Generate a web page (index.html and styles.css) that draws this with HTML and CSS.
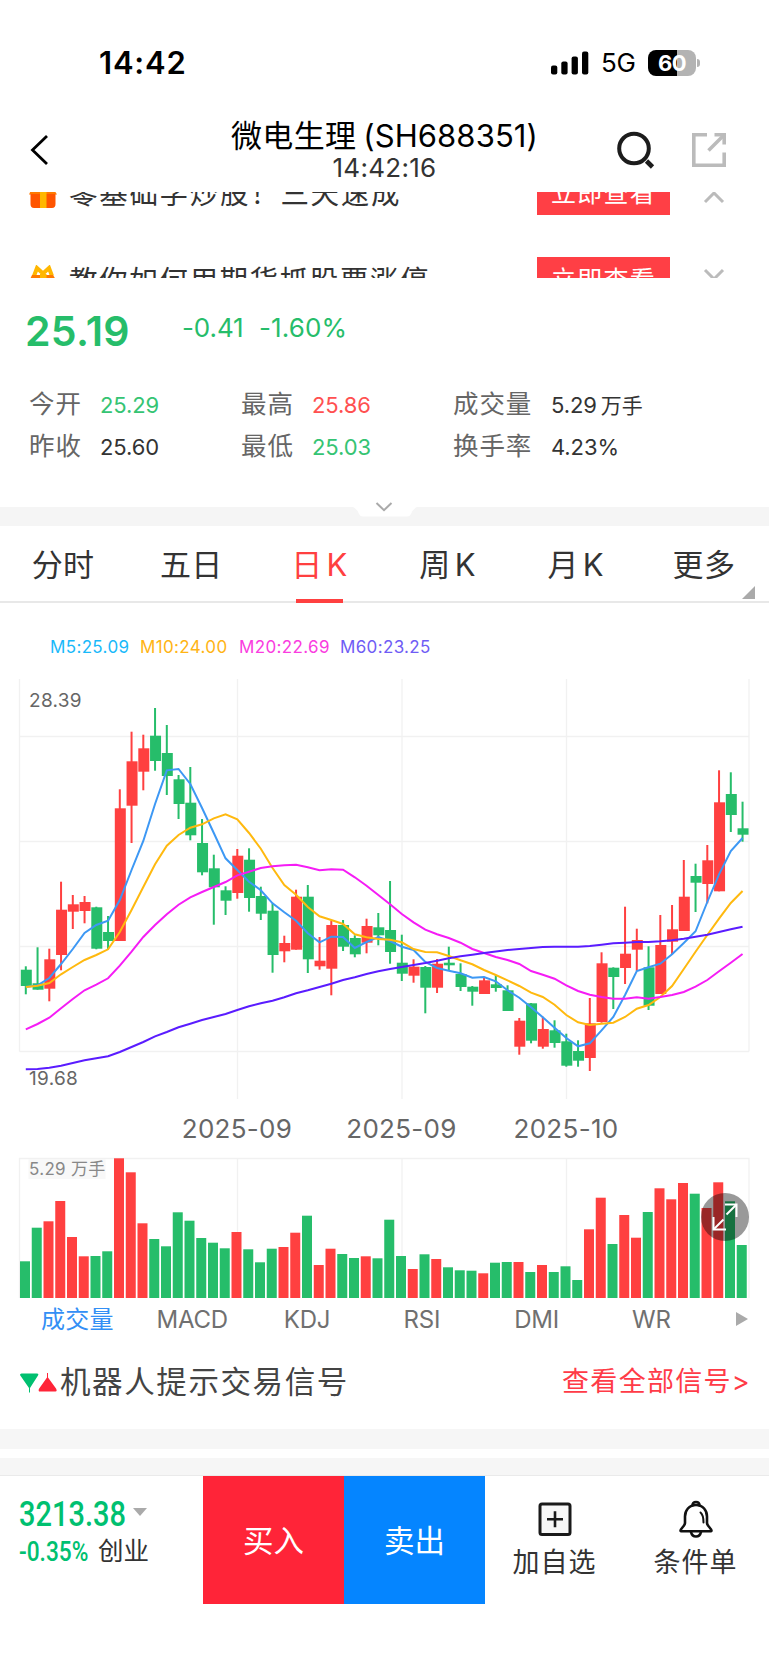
FILE: index.html
```html
<!DOCTYPE html>
<html lang="zh-CN">
  <head>
    <meta charset="utf-8">
    <title>微电生理(SH688351)</title>
    <link rel="stylesheet" href="styles.css">
  </head>
<body>
  <div class="status">
    <span class="status-time">14:42</span>
    <div class="status-right">
      <svg class="signal" width="38" height="24" viewBox="0 0 38 24">
        <rect x="0" y="14.5" width="6.3" height="9" rx="2"/>
        <rect x="10.3" y="10.5" width="6.3" height="13" rx="2"/>
        <rect x="20.6" y="5.5" width="6.3" height="18" rx="2"/>
        <rect x="31" y="0.5" width="6.3" height="23" rx="2"/>
      </svg>
      <span class="net">5G</span>
      <span class="battery">60</span>
      <span class="battery-nub"></span>
    </div>
  </div>

  <header class="header">
    <svg class="back" width="20" height="34" viewBox="0 0 20 34">
      <path d="M17 3 L2.5 17 L17 31" fill="none" stroke="#000" stroke-width="2.8"/>
    </svg>
    <div class="title">
      <h1>微电生理<span class="code">(SH688351)</span></h1>
      <p>14:42:16</p>
    </div>
    <div class="header-icons">
      <svg width="38" height="38" viewBox="0 0 38 38" fill="none" stroke="#1c1c1c" stroke-width="4">
        <circle cx="17" cy="17.5" r="14.8"/>
        <path d="M29.5 30 L35.5 36" stroke-width="4.6"/>
      </svg>
      <svg class="share" width="36" height="36" viewBox="0 0 36 36" fill="none" stroke="#bbb" stroke-width="3.6">
        <path d="M16 2.8 H2.8 V33.2 H33.2 V20.5"/>
        <path d="M23.5 2.8 H33.2 V12.5"/>
        <path d="M33 3 L17.5 18.5"/>
      </svg>
    </div>
  </header>

  <div class="promos">
    <div class="promo">
      <svg class="gift" width="30" height="30" viewBox="0 0 30 30">
        <path d="M6 11 L9 3 L15 8.500 L21 3 L24 11" fill="none" stroke="#ffb700" stroke-width="4"/>
        <path d="M4 10 H25 L29 16.5 H1 Z" fill="#ff7a00"/>
        <path d="M2.5 16 H27.5 V26 Q27.5 30 24 30 H6 Q2.5 30 2.5 26 Z" fill="#ff5500"/>
        <rect x="12" y="9" width="6.5" height="21" fill="#ffb700"/>
      </svg>
      <span class="promo-text">零基础学炒股！三天速成</span>
      <button class="promo-btn">立即查看</button>
      <svg class="promo-arrow" width="22" height="14" viewBox="0 0 22 14"><path d="M2 12 L11 3 L20 12"/></svg>
    </div>
    <div class="promo">
      <svg class="gift" width="30" height="30" viewBox="0 0 30 30">
        <path d="M6 11 L9 3 L15 8.500 L21 3 L24 11" fill="none" stroke="#ffb700" stroke-width="4"/>
        <path d="M4 10 H25 L29 16.5 H1 Z" fill="#ff7a00"/>
        <path d="M2.5 16 H27.5 V26 Q27.5 30 24 30 H6 Q2.5 30 2.5 26 Z" fill="#ff5500"/>
        <rect x="12" y="9" width="6.5" height="21" fill="#ffb700"/>
      </svg>
      <span class="promo-text">教你如何用期货抓股票涨停</span>
      <button class="promo-btn">立即查看</button>
      <svg class="promo-arrow down" width="22" height="14" viewBox="0 0 22 14"><path d="M2 2 L11 11 L20 2"/></svg>
    </div>
  </div>

  <section class="quote">
    <div class="quote-main">
      <span class="price">25.19</span>
      <span class="change">-0.41</span>
      <span class="percent">-1.60%</span>
    </div>
    <div class="stats">
      <div class="stat"><label>今开</label><span class="down">25.29</span></div>
      <div class="stat"><label>最高</label><span class="up">25.86</span></div>
      <div class="stat wide"><label>成交量</label><span>5.29<i>万手</i></span></div>
      <div class="stat"><label>昨收</label><span>25.60</span></div>
      <div class="stat"><label>最低</label><span class="down">25.03</span></div>
      <div class="stat wide"><label>换手率</label><span>4.23%</span></div>
    </div>
  </section>

  <div class="expand">
    <svg width="64" height="19" viewBox="0 0 64 19">
      <path d="M0 0 H64 Q60 2 58 7 Q57 9.5 54 9.5 H10 Q7 9.5 6 7 Q4 2 0 0 Z" fill="#fff"/>
    </svg>
    <svg class="expand-arrow" width="18" height="10" viewBox="0 0 18 10"><path d="M1.5 1 L9 8.2 L16.5 1" fill="none" stroke="#aaa" stroke-width="2"/></svg>
  </div>

  <nav class="tabs">
    <a>分时</a>
    <a>五日</a>
    <a class="active">日<b>K</b></a>
    <a>周<b>K</b></a>
    <a>月<b>K</b></a>
    <a class="more">更多</a>
  </nav>

  <div class="legend">
    <span class="m5">M5:25.09</span>
    <span class="m10">M10:24.00</span>
    <span class="m20">M20:22.69</span>
    <span class="m60">M60:23.25</span>
  </div>

  <svg id="kline" class="kline" width="769" height="478" viewBox="0 0 769 478"></svg>

  <div class="volume-box">
    <svg id="volume" class="volume" width="769" height="150" viewBox="0 0 769 150"></svg>
    <span class="fullscreen">
      <svg width="48" height="48" viewBox="0 0 48 48" fill="none" stroke="#fff" stroke-width="2">
        <path d="M24 11.5 H35.5 V24"/>
        <path d="M35 12 L25.5 21.5"/>
        <path d="M12.5 24 V36.5 H25"/>
        <path d="M13 36 L22.5 26.5"/>
      </svg>
    </span>
  </div>

  <nav class="indicators">
    <a class="active">成交量</a>
    <a>MACD</a>
    <a>KDJ</a>
    <a>RSI</a>
    <a>DMI</a>
    <a>WR</a>
    <span class="next"></span>
  </nav>

  <div class="signals">
    <svg class="signals-icon" width="38" height="22" viewBox="0 0 38 22">
      <path d="M0 3 Q0 1.5 1.5 1.5 H17 Q19 1.5 18 3.5 L10 16 V20.5 H9 V16 L1 4.5 Z" fill="#00c070"/>
      <path d="M19 19.5 Q18 18 19.2 16.5 L27 5.5 V1 H28 V5.5 L36 16.5 Q37.5 19.5 35.5 19.5 Z" fill="#ff2438"/>
    </svg>
    <span class="signals-title">机器人提示交易信号</span>
    <a class="signals-all">查看全部信号&gt;</a>
  </div>
  <div class="gap"></div>
  <div class="gap last"></div>

  <footer class="footer">
    <div class="index">
      <div class="index-value"><b>3213.38</b></div>
      <div class="index-change"><b>-0.35%</b><span>创业</span></div>
    </div>
    <button class="buy">买入</button>
    <button class="sell">卖出</button>
    <div class="action">
      <svg width="34" height="38" viewBox="0 0 34 38">
        <rect x="2" y="4" width="30" height="30.5" rx="2" fill="#f7f7f7" stroke="#1a1a1a" stroke-width="3"/>
        <path d="M9 19.2 H25 M17 11.2 V27.2" stroke="#1a1a1a" stroke-width="2.6"/>
      </svg>
      <span>加自选</span>
    </div>
    <div class="action">
      <svg width="36" height="38" viewBox="0 0 36 38" fill="none" stroke="#111" stroke-width="2.6" stroke-linejoin="round" stroke-linecap="round">
        <path d="M14.5 5.5 Q14.5 2 18 2 Q21.5 2 21.5 5.5"/>
        <path d="M18 5 C11 5 7 10.5 7 16.5 V23 C7 26 2.5 28.5 2.5 30.5 Q2.5 31.3 4 31.3 H32 Q33.5 31.3 33.5 30.5 C33.5 28.5 29 26 29 23 V16.5 C29 10.5 25 5 18 5 Z"/>
        <path d="M13 32 Q14 36.5 18 36.5 Q22 36.5 23 32"/>
        <path d="M22.5 12.5 Q25.5 15 25.5 22.5" stroke-width="2"/>
      </svg>
      <span>条件单</span>
    </div>
  </footer>

  <script src="chart.js"></script>
</body>
</html>
```

FILE: styles.css
```css
* {
	box-sizing: border-box;
}
body {
	margin: 0;
	width: 769px;
	height: 1670px;
	overflow: hidden;
	background: #fff;
	color: #333;
	font-family: Inter, "Noto Sans CJK SC", sans-serif;
}
h1, p {
	margin: 0;
	font-weight: 400;
}
button {
	border: 0;
	padding: 0;
	color: #fff;
	font-family: inherit;
}
svg {
	display: block;
	flex: none;
}

/* 状态栏 */
.status {
	height: 112px;
	padding: 13px 69px 0 99px;
	display: flex;
	align-items: center;
	justify-content: space-between;
	color: #000;
}
.status-time {
	font-size: 31px;
	font-weight: 600;
	letter-spacing: 0.8px;
}
.status-right {
	display: flex;
	align-items: center;
}
.net {
	margin-left: 12px;
	width: 47px;
	font-size: 26px;
	letter-spacing: -0.3px;
}
.battery {
	width: 48px;
	height: 26px;
	border-radius: 8px;
	background: linear-gradient(90deg, #000 60%, #b3b3b3 60%);
	color: #fff;
	font-size: 22px;
	line-height: 26px;
	font-weight: 700;
	letter-spacing: -0.5px;
	text-align: center;
}
.battery-nub {
	width: 3px;
	height: 8px;
	margin-left: 1px;
	border-radius: 0 3px 3px 0;
	background: #b3b3b3;
}

/* 标题栏 */
.header {
	height: 80px;
	padding: 0 42px 5px;
	display: grid;
	grid-template-columns: 1fr auto 1fr;
	align-items: center;
}
.back {
	margin-left: -12px;
}
.title {
	margin-top: 3px;
	text-align: center;
	color: #000;
}
.title h1 {
	font-size: 31px;
	line-height: 33px;
	letter-spacing: 0.3px;
}
.title .code {
	margin-left: 7px;
	letter-spacing: 0.1px;
}
.title p {
	font-size: 26px;
	line-height: 32px;
	letter-spacing: 0.3px;
	color: #333;
}
.header-icons {
	display: flex;
	align-items: center;
	justify-content: flex-end;
	gap: 36px;
}

/* 活动 */
.promos {
	height: 86px;
	overflow: hidden;
}
.promo {
	height: 87px;
	padding-left: 28px;
	display: flex;
	align-items: center;
}
.promo:first-child {
	margin-top: -43px;
}
.promo-text {
	width: 468px;
	margin: -2px 0 0 11px;
	font-size: 28.5px;
	letter-spacing: 1.6px;
	white-space: nowrap;
}
.promo:first-child .promo-text {
	letter-spacing: 1.7px;
}
.promo-btn {
	width: 133px;
	height: 45px;
	margin-left: auto;
	background: #ff3f45;
	font-size: 25px;
	line-height: 46px;
	letter-spacing: 1.3px;
}
.promo-arrow {
	margin: 9px 44px 0 33px;
}
.promo-arrow.down {
	margin-top: -9px;
}
.promo-arrow path {
	fill: none;
	stroke: #bbb;
	stroke-width: 3;
}

/* 行情 */
.quote {
	height: 229px;
	padding-left: 30px;
}
.quote-main {
	height: 106px;
	display: flex;
	align-items: center;
	color: #26bd6a;
	font-size: 26px;
}
.price {
	width: 153px;
	margin-left: -5px;
	font-size: 41px;
	font-weight: 600;
	letter-spacing: 0.3px;
}
.change {
	width: 77px;
	margin: -7px 0 0 4px;
	letter-spacing: -0.1px;
}
.percent {
	margin-top: -7px;
	letter-spacing: 0.1px;
}
.stats {
	display: grid;
	grid-template-columns: 212px 212px auto;
	grid-auto-rows: 42px;
}
.stat {
	display: flex;
	align-items: center;
	font-size: 22px;
	line-height: 42px;
	letter-spacing: -0.1px;
}
.stat label {
	width: 71px;
	margin: -3px 0 0 -1px;
	color: #666;
	font-size: 25.5px;
	letter-spacing: 0.9px;
}
.stat.wide label {
	width: 98px;
}
.stat i {
	margin-left: 4px;
	font-size: 21px;
	font-style: normal;
}
.stat .up {
	color: #ff5050;
}
.stat .down {
	color: #35c473;
}
.expand {
	position: relative;
	height: 19px;
	background: #f5f5f5;
}
.expand > svg {
	margin: 0 auto;
}
.expand .expand-arrow {
	position: absolute;
	left: 375px;
	top: -5px;
}

/* 周期 */
.tabs {
	height: 77px;
	border-bottom: 2px solid #e8e8e8;
	display: grid;
	grid-template-columns: repeat(6, 1fr);
	text-align: center;
	font-size: 31px;
	line-height: 78px;
	letter-spacing: 0.3px;
}
.tabs a {
	position: relative;
	left: -1px;
	height: 77px;
}
.tabs b {
	margin-left: 4px;
	font-weight: 400;
}
.tabs .active {
	color: #ff4040;
}
.tabs .active:after {
	content: "";
	position: absolute;
	left: 41px;
	bottom: 0;
	width: 47px;
	height: 4px;
	background: #ff4040;
}
.tabs .more:after {
	content: "";
	position: absolute;
	right: 13px;
	bottom: 4px;
	border-left: 13px solid transparent;
	border-bottom: 13px solid #aaa;
}
.legend {
	height: 67px;
	padding: 20px 0 0 50px;
	display: flex;
	font-size: 17px;
	line-height: 48px;
	letter-spacing: 0.35px;
}
.legend span {
	width: 100px;
}
.legend .m5 {
	width: 90px;
	color: #19b9fa;
}
.legend .m10 {
	width: 99px;
	color: #ffb414;
}
.legend .m20 {
	width: 101px;
	color: #fa3ce0;
}
.legend .m60 {
	color: #6f5cf5;
}

/* K线 */
.grid {
	fill: none;
	stroke: #f1f1f1;
	stroke-width: 1.3;
}
.rise {
	fill: #ff4040;
}
.fall {
	fill: #26bd6a;
}
.line {
	fill: none;
	stroke-width: 2;
}
.price-label {
	fill: #666;
	font-size: 19px;
	letter-spacing: 0.3px;
}
.date-label {
	fill: #666;
	font-size: 26px;
	letter-spacing: 0.3px;
	text-anchor: middle;
}
.volume-box {
	position: relative;
	height: 150px;
}
.vol-bg {
	fill: #f8f8f8;
}
.vol-label {
	fill: #888;
	font-size: 17px;
	letter-spacing: 0.3px;
}
.fullscreen {
	position: absolute;
	left: 701px;
	top: 44.5px;
	width: 48px;
	height: 48px;
	border-radius: 50%;
	background: rgba(0, 0, 0, .4);
}
.indicators {
	height: 48px;
	margin-top: -2px;
	padding: 0 20px;
	display: flex;
	align-items: center;
	color: #707070;
	font-size: 24px;
	line-height: 48px;
	letter-spacing: -0.2px;
}
.indicators a {
	width: 114.8px;
	text-align: center;
	white-space: nowrap;
}
.indicators .active {
	color: #338ff5;
	letter-spacing: 0.2px;
}
.indicators .next {
	margin: -2px 1px 0 auto;
	border: 7.5px solid transparent;
	border-left: 12px solid #aaa;
	border-right: 0;
}

/* 交易信号 */
.signals {
	height: 85px;
	padding: 0 18px 7px 20px;
	display: flex;
	align-items: center;
	line-height: 40px;
}
.signals-icon {
	margin-top: -1px;
}
.signals-title {
	margin: -2px 0 0 2px;
	font-size: 30.5px;
	letter-spacing: 1.6px;
	color: #444;
}
.signals-all {
	margin: -2px 0 0 auto;
	color: #ff3b47;
	font-size: 27px;
	letter-spacing: 1.3px;
}
.gap {
	height: 20px;
	background: #f6f6f6;
}
.gap.last {
	height: 18px;
	margin-top: 9px;
}

/* 底部 */
.footer {
	height: 129px;
	display: flex;
	box-shadow: 0 -1px 0 #eaeaea;
}
.index {
	width: 203px;
	padding: 19px 0 0 19px;
	color: #00c070;
}
.index b {
	display: inline-block;
	font-family: Roboto, sans-serif;
	font-weight: 500;
	transform-origin: 0 50%;
	transform: scaleX(.84);
}
.index-value {
	display: flex;
	align-items: center;
	height: 38px;
	font-size: 34.5px;
}
.index-value b {
	width: 114px;
}
.index-value:after {
	content: "";
	margin-top: -4px;
	border: 7px solid transparent;
	border-top: 8px solid #aaa;
	border-bottom: 0;
}
.index-change {
	display: flex;
	align-items: center;
	height: 38px;
	font-size: 27px;
	line-height: 38px;
}
.index-change b {
	width: 79px;
}
.index-change span {
	margin-top: -3px;
	color: #333;
	font-size: 25.5px;
}
.buy, .sell {
	width: 141px;
	height: 128px;
	padding-top: 2px;
	background: #ff2438;
	font-size: 30.5px;
	line-height: 126px;
}
.sell {
	background: #0585ff;
}
.action {
	width: 141px;
	padding: 24px 2px 0 0;
	display: flex;
	flex-direction: column;
	align-items: center;
	font-size: 27px;
	line-height: 50px;
	letter-spacing: 1px;
}
```

FILE: chart.js
```js
// 每根K线: [涨1/跌0, 最高, 实体上沿, 实体下沿, 最低, 成交量]
var bars = [
	[0, 296.3, 299.7, 316, 324.3, 36.7],
	[0, 277.3, 313.3, 319.7, 319.7, 70.3],
	[1, 278.7, 289.3, 318.7, 331.3, 76.7],
	[1, 211.7, 239.7, 285, 300.3, 97],
	[1, 225, 234.3, 241.7, 259, 61],
	[1, 226, 232, 241, 253.3, 41.7],
	[0, 236.7, 237.3, 278.7, 279.3, 42],
	[0, 246, 262, 271, 279.3, 46.7],
	[1, 119.3, 138.3, 271, 271, 139.7],
	[1, 61.7, 91.3, 135.7, 173, 125.7],
	[1, 64.7, 78.3, 101.7, 120.3, 74.7],
	[0, 38, 65.7, 91, 100.7, 59],
	[0, 55, 83, 106, 125, 51.7],
	[0, 105, 109.3, 134, 149, 85.7],
	[0, 97, 132.7, 165.3, 170.3, 77.3],
	[0, 149, 173, 202.3, 205.3, 60],
	[0, 184.7, 198.3, 217.3, 254.7, 55.3],
	[0, 216.3, 220.3, 230.7, 245, 49.7],
	[1, 179, 185.7, 223, 228.7, 66],
	[0, 178.3, 189.7, 228, 241.7, 48.7],
	[0, 216.7, 226, 243.7, 250, 35.7],
	[0, 233.3, 240.7, 285, 302.7, 49.3],
	[1, 265.7, 273, 281.3, 292.3, 51],
	[1, 219.7, 226.7, 279.7, 279.7, 65.3],
	[0, 215, 226.7, 289.3, 303, 82.3],
	[1, 267, 290.7, 296.3, 299.7, 33],
	[1, 250.7, 255, 298.7, 325.3, 49.3],
	[0, 250, 255, 276.7, 281, 44],
	[0, 265.3, 268, 284.3, 287.3, 40],
	[1, 248.7, 256, 272.7, 283.3, 41.7],
	[0, 243, 257.3, 265.3, 275.3, 39.7],
	[0, 211, 260, 282, 293.7, 78.3],
	[0, 264.7, 292.7, 303.7, 311, 42],
	[1, 289.3, 296.7, 305.7, 312.7, 29],
	[0, 296, 297, 317.7, 343.3, 43.7],
	[1, 289, 293.7, 317.7, 323, 39],
	[0, 276.7, 292.7, 295.3, 300.7, 30.7],
	[0, 293.3, 304, 317, 321, 27.7],
	[0, 316, 316.7, 321.7, 335.7, 27.3],
	[1, 307.7, 310.3, 324, 324, 24.7],
	[0, 305, 314.3, 318, 321.7, 35.3],
	[0, 315.3, 320.3, 341, 341, 36],
	[1, 348, 350.7, 376.7, 384.7, 36],
	[0, 333, 333.3, 370.7, 373.3, 26],
	[1, 346.7, 359, 376.7, 378.7, 33],
	[0, 350.3, 360.3, 373, 377.7, 26],
	[0, 363.7, 371.3, 395.7, 396.7, 31.7],
	[0, 370.3, 381, 390.7, 396.7, 18],
	[1, 328, 353.3, 388, 401, 68.7],
	[1, 282.3, 293.3, 352, 352.7, 100.3],
	[0, 297.3, 297.7, 307, 339, 54],
	[1, 236.7, 283.7, 298, 314, 83],
	[1, 258.7, 270, 279.7, 301, 60.3],
	[0, 276.3, 297.3, 335.7, 340, 86],
	[1, 245, 275, 324, 324, 109.7],
	[1, 235, 259.3, 271.7, 284.3, 98.7],
	[1, 190, 226.7, 261, 261, 115],
	[0, 193.7, 206, 212.7, 242, 104.3],
	[1, 175, 190.3, 214, 233.3, 90],
	[1, 100.3, 132.3, 221.3, 221.3, 115.7],
	[0, 102.3, 124, 145, 162, 96.7],
	[0, 131.7, 158.3, 164.7, 171.7, 53]
];

// 均线
var lines = {
	"#3d98f4": [317, 315.3, 308, 294, 279, 263, 255, 250.7, 230, 200, 171, 134, 100.3, 99, 114, 138, 163, 188.3, 200, 211.7,
		220.3, 233.3, 242.3, 250.7, 263.3, 272.3, 266.7, 267, 278, 272, 267, 271, 276.7, 280, 292, 298, 300.7, 303.3, 307.7, 307,
		311.3, 320.3, 327.7, 337.3, 347.3, 357.7, 368, 376.3, 373.3, 360.3, 347, 325, 301, 297.3, 293.7, 284.3, 273, 261.3, 232, 204.3, 181, 168],
	"#ffb90f": [317, 315.7, 313, 304.3, 297, 290, 285, 279.3, 262, 240, 217, 194.3, 175.7, 165, 157.7, 154.3, 148.3, 144.3, 149.3, 163,
		178.7, 198, 215, 224.7, 237, 246.3, 250, 254, 264.3, 267.3, 269, 269.7, 272.3, 279, 282, 282.3, 286, 290.3, 294.3, 300,
		305, 310.3, 316, 322.7, 327, 334.7, 345, 352.3, 355, 353.7, 352.7, 347, 338.7, 335, 327, 316, 299, 281.7, 265, 248.7, 233, 221],
	"#f51cf5": [359.3, 354, 347.7, 338.3, 329, 320.3, 314.7, 308.3, 295.7, 281.7, 267, 255, 244.3, 234.7, 227.3, 222, 217, 212, 205.3, 201.7,
		198, 196.3, 195.3, 194.7, 197.3, 200.3, 199.3, 199.7, 207.3, 215.7, 225, 234.3, 244, 252.3, 259.7, 264.3, 268, 272.7, 279, 283,
		287, 290, 294, 301, 304.7, 308.7, 315.3, 321, 324.7, 327, 328.7, 328.7, 327.3, 328.7, 327, 325, 322, 316.7, 310, 301.3, 292.7, 284],
	"#5a1cff": [399.3, 399, 397.7, 395.7, 393, 390.3, 388.3, 386.3, 382, 377, 372, 366.3, 362, 357.3, 353.7, 350, 347, 344, 340, 336.3,
		333.3, 330.7, 327.3, 323.3, 320.3, 317, 313.7, 310, 307.3, 304, 301.3, 299, 297, 295, 293, 290.7, 288.3, 286.3, 284.7, 283,
		281.5, 280, 279, 278, 277, 276.7, 276.7, 276.7, 276, 274.7, 273.3, 272.7, 272, 272, 271.3, 270.3, 268.7, 266.7, 264.7, 262, 259.3, 256.7]
};

var STEP = 11.75;
var FIRST = 25.8;
var dates = [[237.5, "2025-09"], [402, "2025-09"], [566.5, "2025-10"]];

function drawKline() {
	var s = '<path class="grid" d="M19.5 381.5 V9 M749 381.5 V9 M19.5 66.5 H749 M19.5 171.5 H749 M19.5 276.5 H749 M19.5 381.5 H749"/>';
	dates.forEach(function (d) {
		s += '<path class="grid" d="M' + d[0] + ' 9 V429"/>';
		s += '<text class="date-label" x="' + (d[0] - 0.5) + '" y="468">' + d[1] + '</text>';
	});
	bars.forEach(function (b, i) {
		var x = FIRST + i * STEP;
		s += '<g class="' + (b[0] ? "rise" : "fall") + '">';
		s += '<rect x="' + (x - 1) + '" y="' + b[1] + '" width="2" height="' + (b[4] - b[1]) + '"/>';
		s += '<rect x="' + (x - 5) + '" y="' + b[2] + '" width="11" height="' + (b[3] - b[2]) + '"/></g>';
	});
	for (var color in lines) {
		var pts = lines[color].map(function (y, i) {
			return (FIRST + i * STEP) + "," + y;
		});
		s += '<polyline class="line" stroke="' + color + '" points="' + pts.join(" ") + '"/>';
	}
	s += '<text class="price-label" x="29" y="37.3">28.39</text>';
	s += '<text class="price-label" x="29" y="415.3">19.68</text>';
	document.getElementById("kline").innerHTML = s;
}

function drawVolume() {
	var s = '<path class="grid" d="M19.5 150 V10.5 H749 V150"/>';
	dates.forEach(function (d) {
		s += '<path class="grid" d="M' + d[0] + ' 10 V150"/>';
	});
	s += '<rect class="vol-bg" x="28.5" y="11" width="77" height="20"/>';
	s += '<text class="vol-label" x="29" y="27.3">5.29 万手</text>';
	bars.forEach(function (b, i) {
		s += '<rect class="' + (b[0] ? "rise" : "fall") + '" x="' + (20 + i * STEP) + '" y="' + (150 - b[5]) + '" width="10" height="' + b[5] + '"/>';
	});
	document.getElementById("volume").innerHTML = s;
}

drawKline();
drawVolume();
```
